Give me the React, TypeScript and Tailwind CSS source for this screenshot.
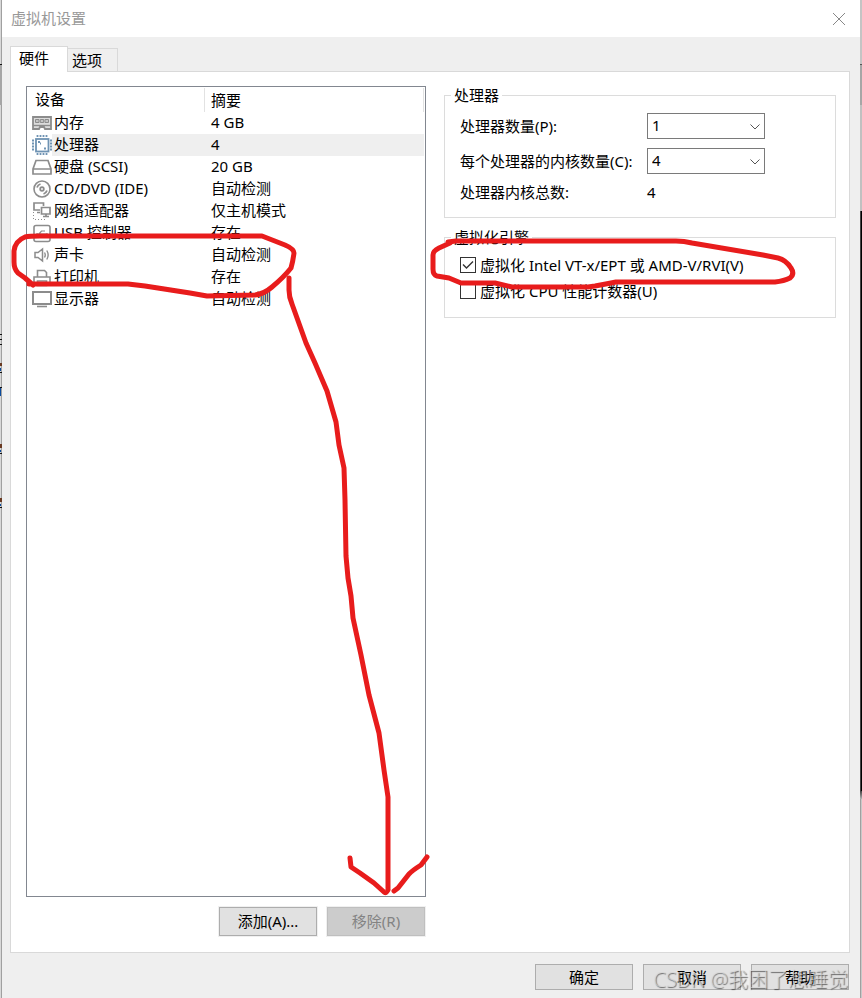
import type { ReactNode } from "react";

type Device = {
  name: string;
  summary: string;
  icon: ReactNode;
  selected?: boolean;
};

const devices: Device[] = [
  {
    name: "内存",
    summary: "4 GB",
    icon: (
      <>
        <path d="M1 5H19V17H13L12 15H8L7 17H1Z" fill="#dcdcdc" strokeWidth="1.8" />
        <path d="M1 13.5H19" strokeWidth="1.4" />
        <path d="M3.5 7.5H7V10.5H3.5ZM8.3 7.5H11.7V10.5H8.3ZM13 7.5H16.5V10.5H13Z" fill="#c4c4c4" />
      </>
    ),
  },
  {
    name: "处理器",
    summary: "4",
    selected: true,
    icon: (
      <g stroke="#6f93b3">
        <rect x="4" y="5" width="12.5" height="12.5" fill="#fff" strokeWidth="1.8" />
        <path
          d="M5.5 1V3M8.5 1V3M11.5 1V3M14.5 1V3M5.5 19V21M8.5 19V21M11.5 19V21M14.5 19V21M0 6.5H2M0 9.5H2M0 12.5H2M0 15.5H2M18 6.5H20M18 9.5H20M18 12.5H20M18 15.5H20"
          strokeWidth="1.8"
        />
        <path d="M6 8H8M12 14.5H14M8 9.5H9" strokeWidth="2" />
      </g>
    ),
  },
  {
    name: "硬盘 (SCSI)",
    summary: "20 GB",
    icon: (
      <path d="M4 4.5H16L19 13V18H1V13ZM1 13H19" fill="#fff" strokeWidth="1.7" />
    ),
  },
  {
    name: "CD/DVD (IDE)",
    summary: "自动检测",
    icon: (
      <>
        <circle cx="10" cy="11" r="8" strokeWidth="1.6" />
        <circle cx="10" cy="11" r="1.8" strokeWidth="1.8" />
        <path d="M5 9.5A5.5 5.5 0 0 1 8.5 6M15 12.5A5.5 5.5 0 0 1 11.5 16" strokeWidth="1.8" />
      </>
    ),
  },
  {
    name: "网络适配器",
    summary: "仅主机模式",
    icon: (
      <>
        <path d="M8 10H2V3H11.5V6M5 12.5H8" strokeWidth="1.7" />
        <path d="M9.5 7.5H18V14H9.5ZM14 14V16.5M11 16.5H17" strokeWidth="1.7" />
        <path d="M1.5 12V19.5H14" strokeDasharray="1 2" />
      </>
    ),
  },
  {
    name: "USB 控制器",
    summary: "存在",
    icon: (
      <>
        <rect x="2" y="3.5" width="16" height="16" rx="2" strokeWidth="1.6" />
        <path d="M5 12H15M7 12L9.5 9H13M9 12L11 15H13.5" strokeWidth="1.2" />
        <path d="M5 11V13M15 11V13" strokeWidth="1.2" />
      </>
    ),
  },
  {
    name: "声卡",
    summary: "自动检测",
    icon: (
      <>
        <path d="M3 8.5H6L10.5 5V17L6 13.5H3Z" strokeWidth="1.5" />
        <path d="M12.5 8.5Q14 11 12.5 13.5M14.8 6.5Q17.5 11 14.8 15.5" strokeWidth="1.4" />
      </>
    ),
  },
  {
    name: "打印机",
    summary: "存在",
    icon: (
      <>
        <path d="M5.5 11V4.5H12.5L14.5 6.5V11" strokeWidth="1.6" />
        <path d="M5 18H2V11H18V18H15" strokeWidth="1.6" />
        <path d="M5.5 15H14.5V19.5H5.5Z" strokeWidth="1.6" />
      </>
    ),
  },
  {
    name: "显示器",
    summary: "自动检测",
    icon: (
      <>
        <rect x="1" y="4" width="18" height="12" strokeWidth="2" />
        <path d="M5 18.5H15" strokeWidth="1.6" />
      </>
    ),
  },
];

function DeviceTable() {
  return (
    <table className="w-full table-fixed border-collapse text-left">
      <colgroup>
        <col className="w-[25px]" />
        <col className="w-[152px]" />
        <col />
      </colgroup>
      <thead>
        <tr className="h-[25px]">
          <th colSpan={2} className="p-0 pb-[2px] pl-2 font-normal">设备</th>
          <th className="p-0 font-normal">
            <div className="h-6 border-x border-[#e2e2e2] pl-[6px] leading-6">摘要</div>
          </th>
        </tr>
      </thead>
      <tbody>
        {devices.map((d) => (
          <tr key={d.name} className="h-[22px]">
            <td className="p-0 pl-[5px]">
              <svg width="20" height="22" viewBox="0 0 20 22" fill="none" stroke="#8c8c8c" className="block">
                {d.icon}
              </svg>
            </td>
            <td className={`p-0 pb-[2px] pl-[2px] whitespace-nowrap ${d.selected ? "bg-[#efefef]" : ""}`}>{d.name}</td>
            <td className={`p-0 pb-[2px] pl-[7px] whitespace-nowrap ${d.selected ? "bg-[#efefef]" : ""}`}>{d.summary}</td>
          </tr>
        ))}
      </tbody>
    </table>
  );
}

function NumberSelect({ id, value }: { id: string; value: string }) {
  return (
    <div className="relative">
      <select
        id={id}
        defaultValue={value}
        className="block h-[26px] w-full appearance-none rounded-none border border-[#7a7a7a] bg-white pb-[2px] pl-1 leading-[22px]"
      >
        {["1", "2", "4", "8"].map((n) => (
          <option key={n}>{n}</option>
        ))}
      </select>
      <svg
        width="10"
        height="6"
        viewBox="0 0 10 6"
        fill="none"
        stroke="#555"
        className="pointer-events-none absolute top-[11px] right-[5px]"
      >
        <path d="M0.5 0.5L5 5L9.5 0.5" />
      </svg>
    </div>
  );
}

function Group({ title, children }: { title: string; children: ReactNode }) {
  return (
    <fieldset className="min-w-0 border border-[#dcdcdc] pr-2 pb-[14px] pl-[6px]">
      <legend className="h-5 px-[3px] leading-5">{title}</legend>
      <div className="pt-2 pl-[9px]">{children}</div>
    </fieldset>
  );
}

function Check({ label, checked }: { label: string; checked?: boolean }) {
  return (
    <label className="flex h-5 items-center gap-1 whitespace-nowrap">
      <span className="relative block size-4">
        <input
          type="checkbox"
          defaultChecked={checked}
          className="peer block size-4 appearance-none border border-[#333] bg-white"
        />
        <svg
          width="16"
          height="16"
          viewBox="0 0 16 16"
          fill="none"
          stroke="#333"
          strokeWidth="1.4"
          className="pointer-events-none absolute inset-0 hidden peer-checked:block"
        >
          <path d="M3 7.5L6.5 11L13 4.5" />
        </svg>
      </span>
      {label}
    </label>
  );
}

// the slivers of the desktop visible on both sides of the dialog
function LeftEdge() {
  return (
    <div className="relative w-[2px] shrink-0 border-r border-[#a0a0a0] bg-[#d8d8d8]">
      <svg width="2" height="998" className="absolute top-0 left-0">
        <path d="M0 64H2V105H0Z" fill="#a6a6a6" />
        <path d="M0 64h2v1h-2zM0 334h2v1h-2zM0 339h2v1h-2zM0 344h2v1h-2zM0 372h2v1h-2zM0 387h2v1h-2zM0 453h2v1h-2zM0 507h2v1h-2z" fill="#111" />
        <path d="M0 363h2v3h-2zM0 444h2v4h-2zM0 498h2v4h-2z" fill="#6a3a22" />
        <path d="M0 368h1v3h-1zM0 388h1v8h-1zM0 450h1v2h-1zM0 504h1v2h-1z" fill="#0a4a9c" />
      </svg>
    </div>
  );
}

function RightEdge() {
  return (
    <div className="flex w-[2px] shrink-0 flex-col">
      <div className="h-16 bg-[#c4c4c4]" />
      <div className="h-px bg-[#555]" />
      <div className="h-10 bg-[#a6a6a6]" />
      <div className="h-[106px] bg-[#c0c0c0]" />
      <div className="h-[580px] border-l border-[#444] bg-black" />
      <div className="h-2 bg-gradient-to-b from-[#444] to-[#b4b4b4]" />
      <div className="flex-1 border-l border-[#a0a0a0] bg-[#c8c8c8]" />
    </div>
  );
}

function Annotations() {
  return (
    <svg
      width="862"
      height="998"
      viewBox="0 0 862 998"
      fill="none"
      stroke="#e81c1c"
      strokeWidth="5"
      strokeLinecap="round"
      strokeLinejoin="round"
      className="pointer-events-none absolute top-0 left-0"
    >
      <path d="M33 285L25 278L18 273Q14 269 14 262V251Q15 241 25 237Q29 236 40 236H262L285 245Q294 249 294 253Q293 261 291 268Q284 277 272 287Q264 294 255 295L207 296L190 293L145 286L128 284H29" />
      <path d="M289 278V290Q289 297 292 304L306 343L315 363L327 391L336 422L339 445L344 468L345 500L346 556L348 578L351 596L353 618L361 655L369 695L379 733L384 770L388 797V888" />
      <path d="M350 858L351 867L360 873L374 883L384 892Q386 894 388 890" />
      <path d="M394 891L398 888L409 874Q413 870 421 865L427 857" />
      <path d="M448 242L456 241H676Q684 241 692 243L763 255L778 258Q786 260 791 268Q795 274 790 278Q784 281 775 282H616Q606 284 595 286L588 287H512L495 283H461L449 278L437 276Q433 275 433 269V255Q433 251 439 248L450 243" />
    </svg>
  );
}

export default function App() {
  return (
    <div className="relative flex min-h-screen overflow-hidden bg-[#efefef] font-['Noto_Sans','Noto_Sans_CJK_SC',sans-serif] text-[15px] leading-5 text-black">
      <LeftEdge />
      <main className="flex min-w-0 flex-1 flex-col">
        <header className="flex h-[37px] items-center justify-between bg-white pr-[15px] pl-[9px]">
          <h1 className="pb-[2px] text-[#999]">虚拟机设置</h1>
          <button type="button" aria-label="关闭">
            <svg width="12" height="12" viewBox="0 0 12 12" stroke="#888" className="block">
              <path d="M0 0L12 12M12 0L0 12" />
            </svg>
          </button>
        </header>

        <div className="flex flex-1 flex-col pr-[10px] pb-2 pl-2">
          <div role="tablist" className="flex h-[34px] items-end">
            <button
              type="button"
              role="tab"
              aria-selected="true"
              className="z-10 -mb-px h-[26px] w-[58px] border border-b-0 border-[#d9d9d9] bg-white pb-1 pl-2 text-left"
            >
              硬件
            </button>
            <button
              type="button"
              role="tab"
              aria-selected="false"
              className="h-[23px] w-[50px] border-t border-r border-[#d9d9d9] pl-1 text-left"
            >
              选项
            </button>
          </div>

          <div className="flex flex-1 gap-[18px] border border-[#d9d9d9] bg-white pt-[14px] pr-[13px] pb-4 pl-[15px]">
            <section className="flex w-[400px] shrink-0 flex-col">
              <div className="flex-1 border border-[#828790] pr-px">
                <DeviceTable />
              </div>
              <div className="mt-[10px] flex justify-end gap-[10px] pr-px">
                <button
                  type="button"
                  className="h-[29px] w-[98px] border border-[#adadad] bg-[#e1e1e1] pb-[2px] ring-1 ring-[#f0f0f0]"
                >
                  添加(A)...
                </button>
                <button
                  type="button"
                  disabled
                  className="h-[29px] w-[98px] border border-[#bfbfbf] bg-[#cccccc] pb-[2px] text-[#838383] ring-1 ring-[#f0f0f0]"
                >
                  移除(R)
                </button>
              </div>
            </section>

            <section className="-mt-px flex min-w-0 flex-1 flex-col gap-[9px]">
              <Group title="处理器">
                <div className="grid grid-cols-[187px_118px] items-center gap-y-[9px] whitespace-nowrap">
                  <label htmlFor="cpus">处理器数量(P):</label>
                  <NumberSelect id="cpus" value="1" />
                  <label htmlFor="cores">每个处理器的内核数量(C):</label>
                  <NumberSelect id="cores" value="4" />
                  <span className="pb-[2px] leading-[18px]">处理器内核总数:</span>
                  <span className="pb-[2px] leading-[18px]">4</span>
                </div>
              </Group>
              <Group title="虚拟化引擎">
                <div className="flex flex-col gap-[6px] pb-[2px]">
                  <Check label="虚拟化 Intel VT-x/EPT 或 AMD-V/RVI(V)" checked />
                  <Check label="虚拟化 CPU 性能计数器(U)" />
                </div>
              </Group>
            </section>
          </div>

          <footer className="flex justify-end gap-[10px] pt-[11px] pr-px">
            {["确定", "取消", "帮助"].map((label) => (
              <button key={label} type="button" className="h-[26px] w-[98px] border border-[#adadad] bg-[#e1e1e1]">
                {label}
              </button>
            ))}
          </footer>
        </div>
      </main>
      <RightEdge />
      <Annotations />
      <p className="pointer-events-none absolute right-[14px] bottom-1 font-['Open_Sans','Noto_Sans_CJK_SC',sans-serif] text-xl leading-7 font-light whitespace-nowrap text-[#dcdcdc]/60 [text-shadow:1px_1px_1px_rgba(0,0,0,0.55)]">
        CSDN @我困了想睡觉
      </p>
    </div>
  );
}
